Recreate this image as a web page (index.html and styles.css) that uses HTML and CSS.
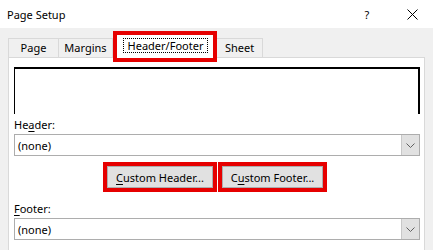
FILE: index.html
```html
<!DOCTYPE html>
<html>
<head>
<meta charset="utf-8">
<link rel="stylesheet" href="styles.css">
</head>
<body>
<div class="window">
  <div class="titlebar">
    <span class="title">Page Setup</span>
    <span class="help">?</span>
    <span class="close"><svg width="11" height="11" viewBox="0 0 11 11"><path d="M0.5 0.5 L10.5 10.5 M10.5 0.5 L0.5 10.5" stroke="#000" stroke-width="1" fill="none"/></svg></span>
  </div>
  <div class="tabs">
    <div class="tab tab-page">Page</div>
    <div class="tab tab-margins">Margins</div>
    <div class="hl hl-tab"><div class="tab-active"><span class="focus">Header/Footer</span></div></div>
    <div class="tab tab-sheet">Sheet</div>
  </div>
  <div class="panel">
    <div class="preview"></div>
    <div class="label label-header">He<u>a</u>der:</div>
    <div class="combo"><span class="value">(none)</span><span class="drop"><svg width="9" height="5" viewBox="0 0 9 5"><polyline points="0.5,0.5 4.5,4.5 8.5,0.5" fill="none" stroke="#606060" stroke-width="1"/></svg></span></div>
    <div class="buttons">
      <div class="hl"><button class="btn btn-header"><u>C</u>ustom Header...</button></div>
      <div class="hl"><button class="btn btn-footer">C<u>u</u>stom Footer...</button></div>
    </div>
    <div class="label label-footer"><u>F</u>ooter:</div>
    <div class="combo"><span class="value">(none)</span><span class="drop"><svg width="9" height="5" viewBox="0 0 9 5"><polyline points="0.5,0.5 4.5,4.5 8.5,0.5" fill="none" stroke="#606060" stroke-width="1"/></svg></span></div>
  </div>
</div>
</body>
</html>
```
FILE: styles.css
```css
html, body {
  margin: 0;
  padding: 0;
}
body {
  background: #f0f0f0;
  font-family: "Noto Sans", "Open Sans", sans-serif;
  font-size: 11px;
  color: #000;
  width: 433px;
  height: 250px;
  overflow: hidden;
}
.titlebar {
  height: 28px;
  background: #fff;
  display: flex;
  align-items: center;
  padding-left: 7px;
  padding-right: 15px;
}
.title {
  flex: 1;
}
.help {
  width: 10px;
  text-align: center;
  margin-right: 35px;
}
.close {
  width: 11px;
  height: 11px;
  display: flex;
}
.tabs {
  display: flex;
  align-items: flex-end;
  margin: 3px 0 0 8px;
}
.tab {
  height: 19px;
  box-sizing: border-box;
  border: 1px solid #d9d9d9;
  border-bottom: none;
  display: flex;
  align-items: center;
  justify-content: center;
  line-height: 16px;
}
.tab-page {
  width: 51px;
}
.tab-margins {
  width: 54px;
  border-left: none;
}
.tab-sheet {
  width: 46px;
  border-left: none;
}
.hl {
  border: 4px solid #e60000;
}
.hl-tab {
  width: 104px;
  height: 31px;
  box-sizing: border-box;
  margin-bottom: -5px;
  position: relative;
  z-index: 1;
}
.tab-active {
  background: #fff;
  height: 100%;
  display: flex;
  justify-content: center;
  align-items: flex-start;
  padding-top: 3px;
  box-sizing: border-box;
}
.focus {
  width: 85px;
  height: 15px;
  box-sizing: border-box;
  border: 1px dotted #000;
  display: flex;
  align-items: center;
  justify-content: center;
  line-height: 13px;
  margin-left: 1px;
}
.panel {
  margin-left: 8px;
  width: 417px;
  height: 200px;
  box-sizing: border-box;
  border: 1px solid #d9d9d9;
  background: #fff;
  padding: 9px 4px 0 5px;
}
.preview {
  height: 47px;
  box-sizing: border-box;
  border-top: 2px solid #000;
  border-left: 1px solid #000;
  border-right: 2px solid #000;
}
.label {
  line-height: 16px;
  height: 16px;
}
.label-header {
  margin-top: 3px;
}
.label-footer {
  margin-top: 9px;
}
.combo {
  margin-top: 1px;
  height: 22px;
  box-sizing: border-box;
  border: 1px solid #adadad;
  display: flex;
  align-items: stretch;
}
.value {
  padding-left: 3px;
  display: flex;
  align-items: center;
  flex: 1;
}
.drop {
  width: 17px;
  background: #e1e1e1;
  border-left: 1px solid #c8c8c8;
  display: flex;
  align-items: center;
  justify-content: center;
}
.buttons {
  display: flex;
  margin-top: 6px;
  padding-left: 89px;
  gap: 1px;
}
.btn {
  height: 22px;
  box-sizing: border-box;
  border: 1px solid #adadad;
  background: #e1e1e1;
  font-family: inherit;
  font-size: 11px;
  color: #000;
  padding: 0;
  margin: 0;
  display: block;
}
.btn-header {
  width: 106px;
}
.btn-footer {
  width: 101px;
}
u {
  text-decoration: underline;
  text-underline-offset: 2px;
}
```
